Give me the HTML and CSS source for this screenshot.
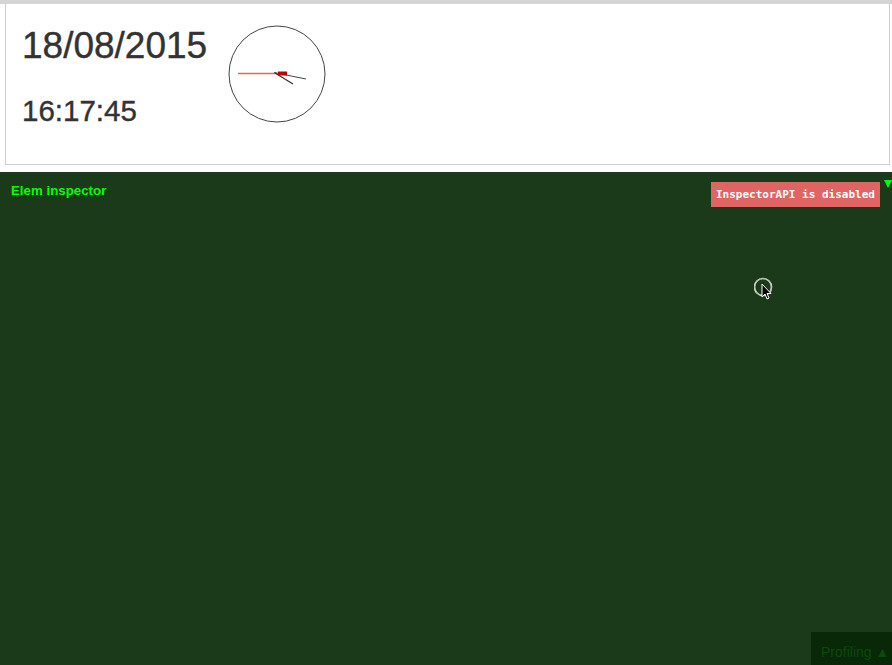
FILE: index.html
```html
<!DOCTYPE html>
<html>
<head>
<meta charset="utf-8">
<link rel="stylesheet" href="styles.css">
</head>
<body>
<div class="topbar"></div>
<div class="panel">
  <div class="datetime">
    <div class="date">18/08/2015</div>
    <div class="time">16:17:45</div>
  </div>
  <svg class="clock" width="100" height="100" viewBox="0 0 100 100">
    <circle cx="50" cy="50" r="48" fill="none" stroke="#444" stroke-width="1"/>
    <line x1="11" y1="49.5" x2="50" y2="49.5" stroke="#d96a6a" stroke-width="1.5"/>
    <line x1="47" y1="48.5" x2="79" y2="55" stroke="#444" stroke-width="1"/>
    <line x1="48" y1="49" x2="66" y2="60" stroke="#333" stroke-width="1.2"/>
    <rect x="51" y="47.5" width="9" height="4" fill="#c00000"/>
  </svg>
</div>
<div class="inspector">
  <div class="title">Elem inspector</div>
  <div class="badge">InspectorAPI is disabled</div>
  <div class="toggle"></div>
  <svg class="cursor" width="22" height="26" viewBox="0 0 22 26">
    <circle cx="9" cy="10" r="8.5" fill="none" stroke="#fff" stroke-width="1.6"/>
    <circle cx="9" cy="10" r="8.5" fill="none" stroke="#000" stroke-width="0.3"/>
    <path d="M8 7 L8 20 L11 17 L13 22 L15 21 L13 16.5 L17 16.5 Z" fill="#000" stroke="#fff" stroke-width="1"/>
  </svg>
  <div class="profiling">Profiling &#9650;</div>
</div>
</body>
</html>
```
FILE: styles.css
```css
html, body {
  margin: 0;
  padding: 0;
  background: #fff;
  width: 892px;
  height: 665px;
  overflow: hidden;
}
body {
  font-family: "Liberation Sans", Arial, sans-serif;
}
.topbar {
  height: 4px;
  background: #d5d5d5;
}
.panel {
  margin: 0 2px 0 5px;
  height: 160px;
  border: 1px solid #cfcfcf;
  border-top: none;
  display: flex;
  align-items: flex-start;
}
.datetime {
  padding: 22px 0 0 16px;
  color: #333;
  width: 205px;
  -webkit-text-stroke: 0.4px #333;
}
.date {
  font-size: 37px;
  line-height: 40px;
}
.time {
  font-size: 29.5px;
  line-height: 32px;
  margin-top: 29px;
}
.clock {
  display: block;
  margin-top: 20px;
}
.inspector {
  position: relative;
  margin-top: 7px;
  height: 493px;
  background: #1b3a1a;
}
.title {
  color: #00ff00;
  font-weight: bold;
  font-size: 13.3px;
  padding: 11px 0 0 11px;
  line-height: 15px;
}
.badge {
  position: absolute;
  left: 711px;
  top: 10px;
  width: 169px;
  height: 25px;
  box-sizing: border-box;
  background: #df6563;
  color: #fff;
  font-family: "DejaVu Sans Mono", "Liberation Mono", monospace;
  font-weight: bold;
  font-size: 11px;
  line-height: 25px;
  padding-left: 5px;
  white-space: nowrap;
}
.toggle {
  position: absolute;
  left: 884px;
  top: 8px;
  width: 0;
  height: 0;
  border-left: 4.5px solid transparent;
  border-right: 4.5px solid transparent;
  border-top: 8px solid #00ff00;
}
.cursor {
  position: absolute;
  left: 754px;
  top: 105px;
}
.profiling {
  position: absolute;
  left: 811px;
  top: 460px;
  width: 81px;
  height: 33px;
  box-sizing: border-box;
  background: #082808;
  color: #0c4a0c;
  font-size: 14px;
  padding: 12px 0 0 10px;
  white-space: nowrap;
  overflow: hidden;
}
```
